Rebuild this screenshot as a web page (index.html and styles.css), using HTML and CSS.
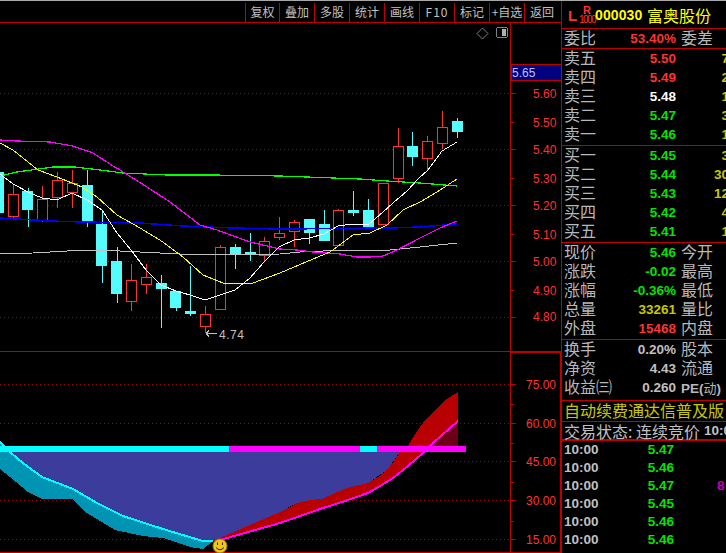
FILE: index.html
```html
<!DOCTYPE html>
<html lang="zh-CN">
<head>
<meta charset="utf-8">
<title>富奥股份 000030</title>
<link rel="stylesheet" href="styles.css">
</head>
<body>
<div class="app">
  <main class="chart">
    <nav class="tools">
      <span class="tool first">复权</span>
      <span class="tool">叠加</span>
      <span class="tool">多股</span>
      <span class="tool">统计</span>
      <span class="tool">画线</span>
      <span class="tool wide">F10</span>
      <span class="tool">标记</span>
      <span class="tool">+自选</span>
      <span class="tool last">返回</span>
    </nav>
    <svg class="plot" viewBox="0 23 561 530" width="561" height="530" xmlns="http://www.w3.org/2000/svg">
      <!-- frame -->
      <path class="frame" d="M510.5 23V553M0 351.5H510M510 351.5H561M510 352.5H561M0 552.5H561M560.5 351V553"/>
      <!-- grid -->
      <path class="grid" d="M0 93.5H510M0 149.5H510M0 205.5H510M0 261.5H510M0 317.5H510M0 384.5H510M0 423.5H510M0 461.5H510M0 500.5H510M0 539.5H510"/>
      <!-- ticks -->
      <path class="frame" d="M511 93.5H516M511 149.5H516M511 205.5H516M511 261.5H516M511 317.5H516M511 122.5H514M511 178.5H514M511 234.5H514M511 290.5H514M511 384.5H516M511 423.5H516M511 461.5H516M511 500.5H516M511 539.5H516M511 404.5H514M511 443.5H514M511 482.5H514M511 521.5H514"/>
      <!-- price tag -->
      <rect class="tag" x="511" y="64.5" width="50" height="15.5"/>
      <text class="tagtext" x="512" y="77">5.65</text>
      <!-- axis labels -->
      <text class="axis" x="533" y="98">5.60</text>
      <text class="axis" x="533" y="127">5.50</text>
      <text class="axis" x="533" y="154">5.40</text>
      <text class="axis" x="533" y="183">5.30</text>
      <text class="axis" x="533" y="210">5.20</text>
      <text class="axis" x="533" y="239">5.10</text>
      <text class="axis" x="533" y="266">5.00</text>
      <text class="axis" x="533" y="295">4.90</text>
      <text class="axis" x="533" y="321">4.80</text>
      <text class="axis" x="526" y="389">75.00</text>
      <text class="axis" x="526" y="428">60.00</text>
      <text class="axis" x="526" y="466">45.00</text>
      <text class="axis" x="526" y="505">30.00</text>
      <text class="axis" x="526" y="544">15.00</text>
      <!-- top-right icons -->
      <path class="diamond" d="M482.5 28L488 33.5L482.5 39L477 33.5Z"/>
      <rect class="toggle" x="496.5" y="27.5" width="11" height="10" rx="2"/>
      <rect class="togglefill" x="502" y="29" width="4" height="7"/>
      <!-- candles -->
      <path class="wick-red" d="M13.5 184V220M42.5 186V222M57.5 172V208M72.5 170V208M131.5 264V311M146.5 264V294M205.5 306V333M220.5 245V309M264.5 237V261M279.5 217V240M294.5 220V247M338.5 209V245M383.5 183V225M398.5 128V183M427.5 136V170M442.5 111V149"/>
      <path class="wick-cyan" d="M28.5 188V227M87.5 170V227M102.5 210V283M117.5 247V303M161.5 275V328M176.5 291V311M190.5 266V316M235.5 244V269M250.5 233V261M309.5 219V244M324.5 210V241M353.5 191V216M368.5 199V229M412.5 132V166M457.5 118V138"/>
      <g class="up">
        <rect x="8.5" y="194.5" width="10" height="22"/>
        <rect x="37.5" y="199.5" width="10" height="21"/>
        <rect x="52.5" y="180.5" width="10" height="17"/>
        <rect x="67.5" y="183.5" width="10" height="9"/>
        <rect x="126.5" y="280.5" width="10" height="21"/>
        <rect x="141.5" y="277.5" width="10" height="7"/>
        <rect x="200.5" y="314.5" width="10" height="12"/>
        <rect x="215.5" y="247.5" width="10" height="62"/>
        <rect x="259.5" y="241.5" width="10" height="14"/>
        <rect x="274.5" y="233.5" width="10" height="4"/>
        <rect x="289.5" y="222.5" width="10" height="9"/>
        <rect x="333.5" y="210.5" width="10" height="35"/>
        <rect x="378.5" y="183.5" width="10" height="41"/>
        <rect x="393.5" y="146.5" width="10" height="32"/>
        <rect x="422.5" y="141.5" width="10" height="17"/>
        <rect x="437.5" y="127.5" width="10" height="16"/>
      </g>
      <g class="down">
        <rect x="0" y="172" width="4" height="41"/>
        <rect x="22" y="191" width="11" height="19"/>
        <rect x="82" y="185" width="11" height="38"/>
        <rect x="96" y="224" width="11" height="42"/>
        <rect x="111" y="261" width="11" height="33"/>
        <rect x="156" y="283" width="11" height="6"/>
        <rect x="170" y="291" width="11" height="17"/>
        <rect x="185" y="311" width="11" height="3"/>
        <rect x="230" y="247" width="11" height="8"/>
        <rect x="245" y="252" width="11" height="3"/>
        <rect x="304" y="219" width="11" height="14"/>
        <rect x="319" y="224" width="11" height="17"/>
        <rect x="348" y="210" width="11" height="3"/>
        <rect x="363" y="210" width="11" height="17"/>
        <rect x="407" y="146" width="11" height="11"/>
        <rect x="452" y="121" width="11" height="11"/>
      </g>
      <!-- moving averages -->
      <polyline class="ma ma-gray" points="0,254 33,253 67,251 100,250 140,252 200,255 280,254 300,252 347,250 390,250 420,247 457,243"/>
      <polyline class="ma ma-green" points="0,176 17,172 53,167 75,167 100,170 123,173 167,175 213,175 280,176 360,179 387,181 420,183 457,186"/>
      <polyline class="ma ma-blue" points="0,218 50,221 83,222 140,223 183,226 233,228 280,229 390,228 420,227 457,224"/>
      <polyline class="ma ma-magenta" points="0,140 17,141 50,142 73,146 93,153 113,166 120,170 147,187 170,202 200,225 217,230 250,242 280,249 297,250 313,252 340,254 357,257 370,257 383,256 397,250 420,238 440,228 457,221"/>
      <polyline class="ma ma-yellow" points="0,143 13,150 38,170 57,177 82,187 97,197 117,215 140,228 163,242 183,257 203,275 223,283 238,284 253,283 280,273 313,259 330,252 353,235 370,233 387,225 403,210 420,202 437,192 457,179"/>
      <polyline class="ma ma-white" points="0,174 13,184 28,192 42,198 57,200 72,193 87,200 102,210 117,233 131,250 146,270 161,285 176,291 190,295 205,300 220,295 235,290 250,278 264,262 279,247 294,240 309,238 324,234 338,226 353,224 368,225 383,212 393,203 407,191 418,179 428,170 442,151 457,142"/>
      <!-- low marker -->
      <path class="lowmark" d="M206 333.5H217M206 333.5L209 330.5M206 333.5L209 336.5"/>
      <text class="lowtext" x="219" y="339">4.74</text>
      <!-- indicator -->
      <polygon class="teal" points="0,442 10,452 23,463 42,477 73,489 97,503 123,516 163,529 203,541 213,541 203,549 190,547 163,538 143,536 115,530 87,513 72,499 42,499 28,492 10,477 0,469"/>
      <polygon class="indigo" points="10,452 23,463 42,477 73,489 97,503 123,516 163,529 203,541 213,541 280,512 297,503 322,499 347,488 368,483 387,470 400,452"/>
      <polygon class="crimson" points="213,541 280,512 290,507 297,503 310,500 322,499 335,493 347,488 368,483 378,477 387,470 394,461 400,452 407,447 416,433 425,420 433,412 443,402 450,397 458,392 458,421 433,443 423,453 408,466 393,478 380,486 368,493 345,501 323,508 300,516 280,523 220,540"/>
      <polygon class="maroon" points="433,443 458,421 458,447 433,447"/>
      <polyline class="ind-cyan" points="0,442 10,452 23,463 42,477 73,489 97,503 123,516 163,529 203,541 213,541"/>
      <polyline class="ind-magenta" points="220,540 280,523 300,516 323,508 345,501 368,493 380,486 393,478 408,466 423,453 433,443 458,421"/>
      <rect class="bar-cyan" x="0" y="446" width="229" height="6"/>
      <rect class="bar-magenta" x="229" y="446" width="131" height="6"/>
      <rect class="bar-cyan" x="360" y="446" width="17" height="6"/>
      <rect class="bar-magenta" x="377" y="446" width="89" height="6"/>
      <!-- smiley -->
      <circle class="smile-face" cx="220" cy="546" r="7"/>
      <path class="smile-line" d="M217.5 542.5V545M222.5 542.5V545M216 547.5Q220 552 224 547.5"/>
    </svg>
  </main>

  <aside class="panel">
    <header class="head">
      <span class="mark-l">L</span>
      <span class="mark-r"><span class="mark-r1">R</span><span class="mark-r2">1000</span></span>
      <span class="code">000030</span>
      <span class="name">富奥股份</span>
    </header>
    <section class="sec sec-ratio">
      <div class="row"><span class="lab">委比</span><span class="val red pct">53.40%</span><span class="lab2">委差</span></div>
    </section>
    <section class="sec sec-block">
      <div class="row"><span class="lab">卖五</span><span class="val red">5.50</span><span class="vol">7</span></div>
      <div class="row"><span class="lab">卖四</span><span class="val red">5.49</span><span class="vol">2</span></div>
      <div class="row"><span class="lab">卖三</span><span class="val white">5.48</span><span class="vol">1</span></div>
      <div class="row"><span class="lab">卖二</span><span class="val green">5.47</span><span class="vol">3</span></div>
      <div class="row"><span class="lab">卖一</span><span class="val green">5.46</span><span class="vol">1</span></div>
    </section>
    <section class="sec sec-block">
      <div class="row"><span class="lab">买一</span><span class="val green">5.45</span><span class="vol">3</span></div>
      <div class="row"><span class="lab">买二</span><span class="val green">5.44</span><span class="vol">30</span></div>
      <div class="row"><span class="lab">买三</span><span class="val green">5.43</span><span class="vol">12</span></div>
      <div class="row"><span class="lab">买四</span><span class="val green">5.42</span><span class="vol">4</span></div>
      <div class="row"><span class="lab">买五</span><span class="val green">5.41</span><span class="vol">1</span></div>
    </section>
    <section class="sec sec-block">
      <div class="row"><span class="lab">现价</span><span class="val green">5.46</span><span class="lab2">今开</span></div>
      <div class="row"><span class="lab">涨跌</span><span class="val green">-0.02</span><span class="lab2">最高</span></div>
      <div class="row"><span class="lab">涨幅</span><span class="val green">-0.36%</span><span class="lab2">最低</span></div>
      <div class="row"><span class="lab">总量</span><span class="val olive">33261</span><span class="lab2">量比</span></div>
      <div class="row"><span class="lab">外盘</span><span class="val red">15468</span><span class="lab2">内盘</span></div>
    </section>
    <section class="sec sec-fund">
      <div class="row"><span class="lab">换手</span><span class="val gray">0.20%</span><span class="lab2">股本</span></div>
      <div class="row"><span class="lab">净资</span><span class="val gray">4.43</span><span class="lab2">流通</span></div>
      <div class="row"><span class="lab">收益㈢</span><span class="val gray">0.260</span><span class="lab2 pe">PE(<span class="pe-cjk">动</span>)</span></div>
    </section>
    <section class="sec sec-ad">
      <div class="row ad">自动续费通达信普及版</div>
    </section>
    <section class="sec sec-status">
      <div class="row status">交易状态: 连续竞价 <span class="status-time">10:00</span></div>
    </section>
    <section class="ticks">
      <div class="tick"><span class="time">10:00</span><span class="tprice">5.47</span></div>
      <div class="tick"><span class="time">10:00</span><span class="tprice">5.46</span></div>
      <div class="tick"><span class="time">10:00</span><span class="tprice">5.47</span><span class="tvol">8</span></div>
      <div class="tick"><span class="time">10:00</span><span class="tprice">5.45</span></div>
      <div class="tick"><span class="time">10:00</span><span class="tprice">5.46</span></div>
      <div class="tick"><span class="time">10:00</span><span class="tprice">5.46</span></div>
    </section>
  </aside>
</div>
</body>
</html>
```
FILE: styles.css
```css
* { box-sizing: border-box; }
html, body { margin: 0; padding: 0; background: #000; }
body { width: 726px; height: 553px; overflow: hidden; font-family: "Liberation Sans", "Noto Sans CJK SC", sans-serif; }

.app { display: flex; width: 726px; height: 553px; border-top: 1px solid #a8a8a8; }

/* left: toolbar + chart */
.chart { width: 561px; height: 552px; flex: none; }
.tools { display: flex; justify-content: flex-end; height: 22px; border-bottom: 1px solid #c00000; padding-top: 2px; }
.tool { width: 35px; border-left: 1px solid #c00000; color: #c0c0c0; font: 12px/18px "Noto Sans CJK SC", sans-serif; text-align: center; white-space: nowrap; }
.tool.first { width: 34px; }
.tool.last { width: 37px; padding-right: 2px; }
.tool.wide { letter-spacing: 1px; }
.plot { display: block; shape-rendering: crispEdges; }

.frame { stroke: #c00000; fill: none; stroke-width: 1; }
.grid { stroke: #a80000; fill: none; stroke-width: 1; stroke-dasharray: 1 3; }
.tag { fill: #000080; stroke: #c00000; stroke-width: 1; }
.tagtext { fill: #c0c0ff; font: 12px "Liberation Sans", sans-serif; }
.axis { fill: #ff3232; font: 12px "Liberation Sans", sans-serif; }
.diamond { fill: none; stroke: #808080; stroke-width: 1; shape-rendering: geometricPrecision; }
.toggle { fill: #000; stroke: #808080; stroke-width: 1; }
.togglefill { fill: #b0b0b0; }

.wick-red { stroke: #ff3232; fill: none; }
.wick-cyan { stroke: #54fcfc; fill: none; }
.up rect { fill: #000; stroke: #ff3232; stroke-width: 1; }
.down rect { fill: #54fcfc; }

.ma { fill: none; stroke-width: 1; }
.ma-white { stroke: #ffffff; }
.ma-yellow { stroke: #ffff00; }
.ma-magenta { stroke: #ff00ff; stroke-width: 1.2; }
.ma-green { stroke: #00ff00; stroke-width: 1.2; }
.ma-blue { stroke: #0000ff; stroke-width: 1.5; }
.ma-gray { stroke: #c0c0c0; }

.lowmark { stroke: #c0c0c0; fill: none; }
.lowtext { fill: #c0c0c0; font: 12px "Liberation Sans", sans-serif; letter-spacing: 0.5px; }

.teal { fill: #0094b4; }
.indigo { fill: #3c3c9c; }
.crimson { fill: #b80000; }
.maroon { fill: #6c0014; }
.ind-cyan { fill: none; stroke: #00ffff; stroke-width: 2; }
.ind-magenta { fill: none; stroke: #ff00ff; stroke-width: 2; }
.bar-cyan { fill: #00ffff; }
.bar-magenta { fill: #ff00ff; }
.smile-face { fill: #ecc81c; stroke: #a08000; stroke-width: 1; shape-rendering: geometricPrecision; }
.smile-line { fill: none; stroke: #402000; stroke-width: 1; shape-rendering: geometricPrecision; }

/* right: quote panel */
.panel { width: 165px; flex: none; height: 552px; border-left: 1px solid #c00000; overflow: hidden; }
.head { display: flex; align-items: center; height: 28px; border-bottom: 1px solid #c00000; padding-left: 6px; }
.mark-l { color: #ff3232; font: bold 15px/1 "Liberation Sans", sans-serif; width: 11px; margin-top: 2px; }
.mark-r { display: flex; flex-direction: column; align-items: center; width: 16px; color: #ff3232; }
.mark-r1 { font: bold 11px/10px "Liberation Sans", sans-serif; }
.mark-r2 { font: 10px/10px "Liberation Sans", sans-serif; letter-spacing: -1.5px; }
.code { color: #ffff00; font: bold 14px/1 "Liberation Sans", sans-serif; letter-spacing: 0.1px; width: 52px; }
.name { color: #ffff00; font: 16px/1 "Noto Sans CJK SC", sans-serif; }

.sec { border-bottom: 1px solid #c00000; }
.sec-ratio { height: 20px; }
.sec-block { height: 97px; }
.sec-fund { height: 61px; }
.sec-ad { height: 21px; }
.sec-status { height: 19px; border-bottom-width: 2px; }
.row { display: flex; align-items: center; height: 19px; width: 167px; padding-left: 2px; white-space: nowrap; }
.lab, .lab2 { color: #b8b8b8; font: 16px/17px "Noto Sans CJK SC", sans-serif; padding-bottom: 2px; }
.lab { width: 40px; flex: none; }
.lab2 { margin-left: 5px; }
.val { width: 72px; flex: none; text-align: right; font: bold 13.5px/19px "Liberation Sans", sans-serif; }
.vol { flex: 1; text-align: right; color: #c8c800; font: bold 13.5px/19px "Liberation Sans", sans-serif; }
.red { color: #ff3232; }
.green { color: #00e600; }
.white { color: #ffffff; }
.olive { color: #c8c800; }
.gray { color: #c0c0c0; }
.pe { font: bold 13.5px/19px "Liberation Sans", sans-serif; padding-bottom: 0; }
.pe-cjk { font: 13px/19px "Noto Sans CJK SC", sans-serif; }
.ad { color: #c8c800; font: 16px/19px "Noto Sans CJK SC", sans-serif; }
.status { color: #c0c0c0; font: 16px/18px "Noto Sans CJK SC", sans-serif; height: 18px; }
.status-time { font: bold 13.5px/18px "Liberation Sans", sans-serif; margin-left: 4px; }

.tick { display: flex; align-items: center; height: 18px; padding-left: 2px; font: bold 13.5px/18px "Liberation Sans", sans-serif; white-space: nowrap; }
.time { width: 40px; color: #c0c0c0; flex: none; }
.tprice { width: 70px; text-align: right; color: #00e600; flex: none; }
.tvol { margin-left: 43px; color: #c000c0; }
```
